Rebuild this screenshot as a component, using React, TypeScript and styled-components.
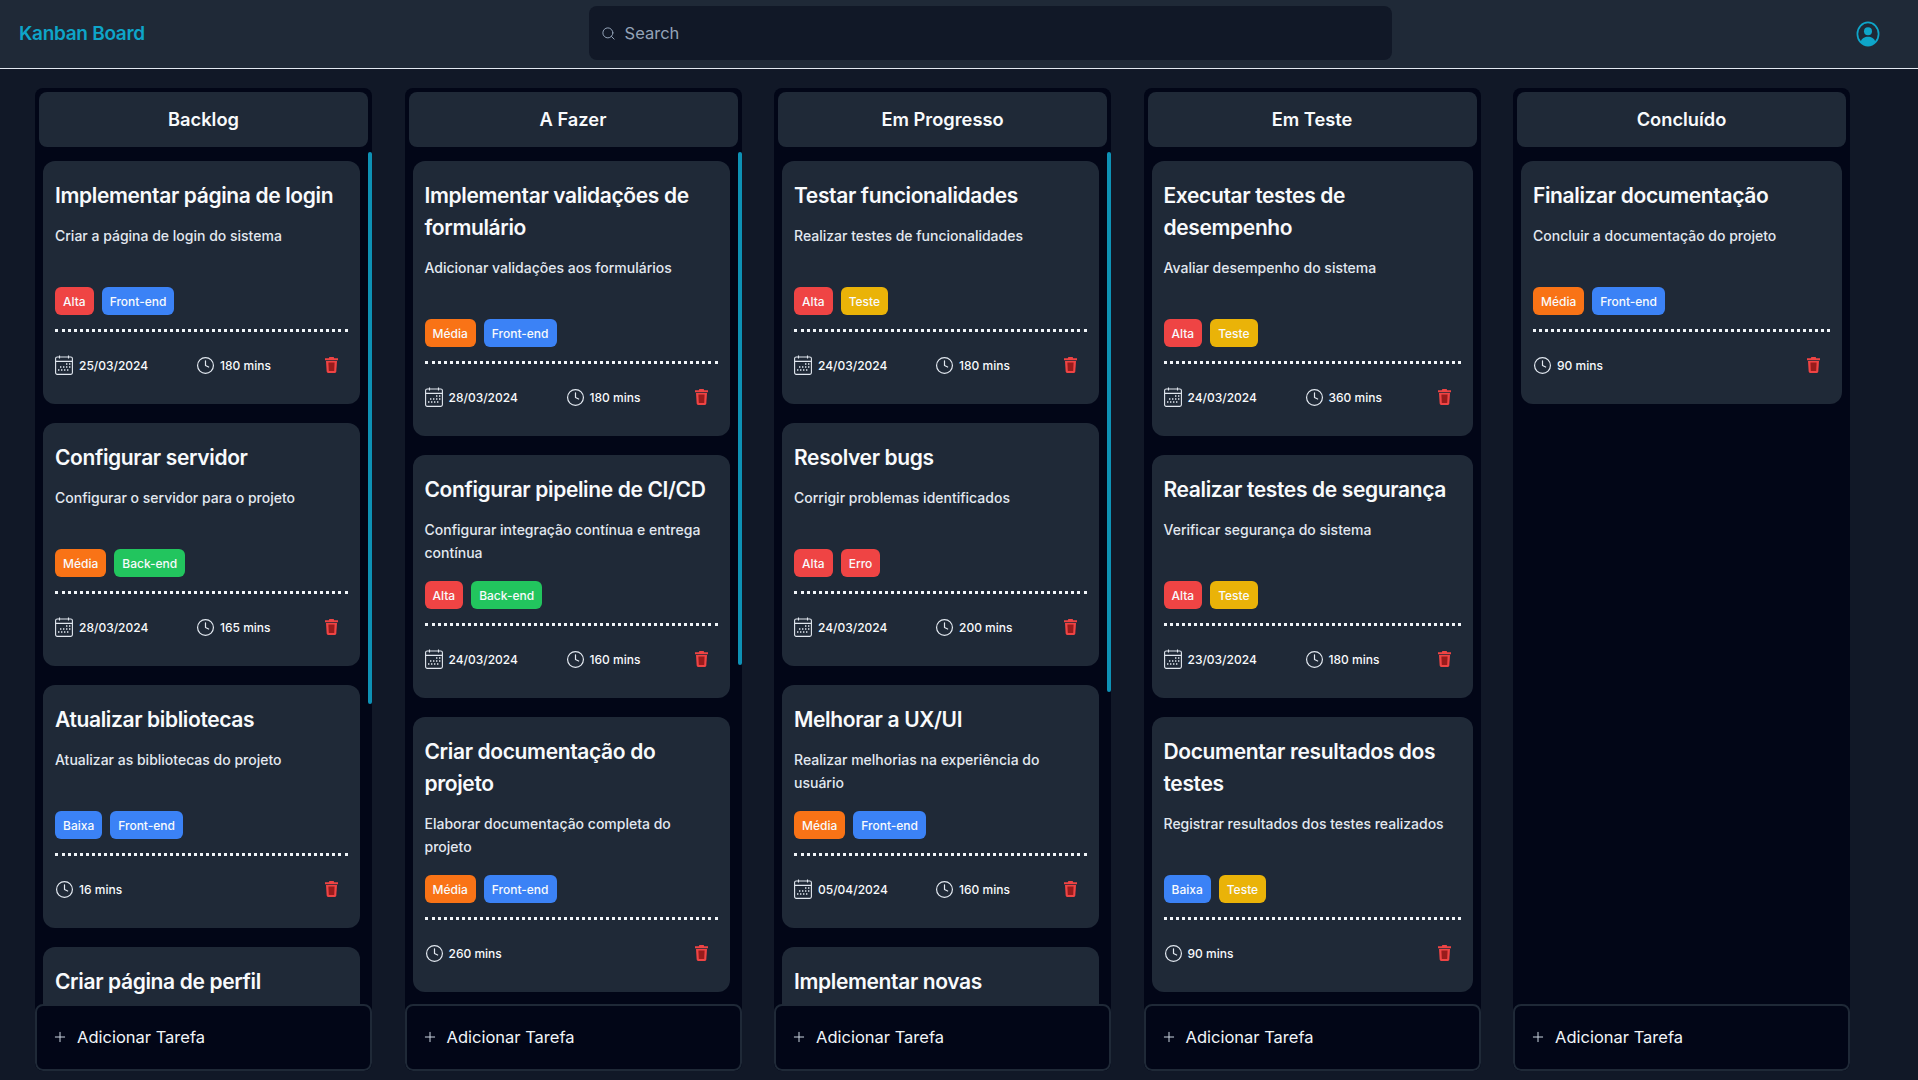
import { Clock, Plus, Search } from 'lucide-react'
import styled, { createGlobalStyle } from 'styled-components'

type TagKind = 'red' | 'orange' | 'blue' | 'green' | 'yellow'

interface Tarefa {
  titulo: string
  descricao: string
  tags: [string, TagKind][]
  data?: string
  tempo: string
}

interface Coluna {
  nome: string
  thumb?: number
  tarefas: Tarefa[]
}

const alta: [string, TagKind] = ['Alta', 'red']
const media: [string, TagKind] = ['Média', 'orange']
const baixa: [string, TagKind] = ['Baixa', 'blue']
const front: [string, TagKind] = ['Front-end', 'blue']
const back: [string, TagKind] = ['Back-end', 'green']
const teste: [string, TagKind] = ['Teste', 'yellow']
const erro: [string, TagKind] = ['Erro', 'red']

const colunas: Coluna[] = [
  {
    nome: 'Backlog',
    thumb: 552,
    tarefas: [
      { titulo: 'Implementar página de login', descricao: 'Criar a página de login do sistema', tags: [alta, front], data: '25/03/2024', tempo: '180 mins' },
      { titulo: 'Configurar servidor', descricao: 'Configurar o servidor para o projeto', tags: [media, back], data: '28/03/2024', tempo: '165 mins' },
      { titulo: 'Atualizar bibliotecas', descricao: 'Atualizar as bibliotecas do projeto', tags: [baixa, front], tempo: '16 mins' },
      { titulo: 'Criar página de perfil', descricao: '', tags: [], tempo: '' },
    ],
  },
  {
    nome: 'A Fazer',
    thumb: 513,
    tarefas: [
      { titulo: 'Implementar validações de formulário', descricao: 'Adicionar validações aos formulários', tags: [media, front], data: '28/03/2024', tempo: '180 mins' },
      { titulo: 'Configurar pipeline de CI/CD', descricao: 'Configurar integração contínua e entrega contínua', tags: [alta, back], data: '24/03/2024', tempo: '160 mins' },
      { titulo: 'Criar documentação do projeto', descricao: 'Elaborar documentação completa do projeto', tags: [media, front], tempo: '260 mins' },
    ],
  },
  {
    nome: 'Em Progresso',
    thumb: 540,
    tarefas: [
      { titulo: 'Testar funcionalidades', descricao: 'Realizar testes de funcionalidades', tags: [alta, teste], data: '24/03/2024', tempo: '180 mins' },
      { titulo: 'Resolver bugs', descricao: 'Corrigir problemas identificados', tags: [alta, erro], data: '24/03/2024', tempo: '200 mins' },
      { titulo: 'Melhorar a UX/UI', descricao: 'Realizar melhorias na experiência do usuário', tags: [media, front], data: '05/04/2024', tempo: '160 mins' },
      { titulo: 'Implementar novas', descricao: '', tags: [], tempo: '' },
    ],
  },
  {
    nome: 'Em Teste',
    tarefas: [
      { titulo: 'Executar testes de desempenho', descricao: 'Avaliar desempenho do sistema', tags: [alta, teste], data: '24/03/2024', tempo: '360 mins' },
      { titulo: 'Realizar testes de segurança', descricao: 'Verificar segurança do sistema', tags: [alta, teste], data: '23/03/2024', tempo: '180 mins' },
      { titulo: 'Documentar resultados dos testes', descricao: 'Registrar resultados dos testes realizados', tags: [baixa, teste], tempo: '90 mins' },
    ],
  },
  {
    nome: 'Concluído',
    tarefas: [
      { titulo: 'Finalizar documentação', descricao: 'Concluir a documentação do projeto', tags: [media, front], tempo: '90 mins' },
    ],
  },
]

function CalendarIcon() {
  return (
    <svg width="18" height="20" viewBox="0 0 18 20" fill="none" stroke="#e2e8f0" strokeWidth="1.1">
      <rect x="0.6" y="2" width="16.8" height="17.4" rx="1.6" />
      <path d="M0.6 6.4h16.8M4.5 0.4v3M13.5 0.4v3" />
      <path d="M11 9h1.4M14 9h1.4M5 12h1.4M8 12h1.4M11 12h1.4M14 12h1.4M3 15h1.4M6 15h1.4M9 15h1.4M12 15h1.4" strokeWidth="1.7" />
    </svg>
  )
}

function TrashIcon() {
  return (
    <svg width="13" height="16" viewBox="0 0 13 16" fill="#ef4444">
      <path d="M4.4 0h4.2l.6 1.3H13v1.9H0V1.3h3.8z" />
      <path d="M1 4h11l-.7 10.6c-.1.8-.6 1.4-1.4 1.4H3.1c-.8 0-1.3-.6-1.4-1.4z" />
      <path d="M3.4 5.5h6.2l-.4 8.5H3.8z" fill="#991b1b" />
    </svg>
  )
}

function UserIcon() {
  return (
    <svg width="24" height="26" viewBox="0 0 24 26">
      <ellipse cx="12" cy="13" rx="10.6" ry="11.6" fill="none" stroke="#0ea5c9" strokeWidth="1.7" />
      <circle cx="12" cy="10.2" r="4" fill="#0ea5c9" />
      <path d="M4.6 21c1-3.6 4-5.2 7.4-5.2s6.4 1.6 7.4 5.2c-1.8 2.2-4.4 3.6-7.4 3.6S6.4 23.2 4.6 21z" fill="#0ea5c9" />
    </svg>
  )
}

function Cartao({ tarefa }: { tarefa: Tarefa }) {
  return (
    <Card>
      <CardTitle>{tarefa.titulo}</CardTitle>
      <CardDescription>{tarefa.descricao}</CardDescription>
      <TagRow>
        {tarefa.tags.map(([texto, kind]) => (
          <Tag key={texto} $kind={kind}>{texto}</Tag>
        ))}
      </TagRow>
      <Dotted />
      <CardFooter>
        {tarefa.data && (
          <DateInfo>
            <CalendarIcon />
            {tarefa.data}
          </DateInfo>
        )}
        <TimeInfo>
          <Clock size={19} strokeWidth={1.5} color="#e2e8f0" />
          {tarefa.tempo}
        </TimeInfo>
        <TrashButton>
          <TrashIcon />
        </TrashButton>
      </CardFooter>
    </Card>
  )
}

export default function App() {
  return (
    <>
      <GlobalStyle />
      <Header>
        <Logo>Kanban Board</Logo>
        <SearchBox>
          <Search size={15} strokeWidth={1.6} color="#94a3b8" />
          <span>Search</span>
        </SearchBox>
        <UserIcon />
      </Header>
      <Board>
        {colunas.map((coluna) => (
          <Column key={coluna.nome}>
            <ColumnHeader>{coluna.nome}</ColumnHeader>
            {coluna.thumb && <ScrollThumb style={{ height: coluna.thumb }} />}
            <CardList $scroll={!!coluna.thumb}>
              {coluna.tarefas.map((tarefa) => (
                <Cartao key={tarefa.titulo} tarefa={tarefa} />
              ))}
            </CardList>
            <AddButton>
              <Plus size={16} strokeWidth={1.5} color="#cbd5e1" />
              Adicionar Tarefa
            </AddButton>
          </Column>
        ))}
      </Board>
    </>
  )
}

const tagColors: Record<TagKind, string> = {
  red: '#ef4444',
  orange: '#f97316',
  blue: '#3b82f6',
  green: '#22c55e',
  yellow: '#eab308',
}

const GlobalStyle = createGlobalStyle`
  html, body {
    margin: 0;
    height: 100%;
    overflow: hidden;
    background: #111827;
  }
  body {
    font-family: Inter, "Liberation Sans", sans-serif;
    color: #f8fafc;
  }
`

const Header = styled.header`
  height: 68px;
  box-sizing: content-box;
  display: flex;
  align-items: center;
  justify-content: space-between;
  padding: 0 38px 0 19px;
  background: #1f2937;
  border-bottom: 1px solid #e2e8f0;
`

const Logo = styled.div`
  width: 570px;
  margin-bottom: 2px;
  font-size: 19px;
  letter-spacing: -0.3px;
  font-weight: 600;
  color: #0ea5c9;
`

const SearchBox = styled.div`
  width: 804px;
  height: 54px;
  box-sizing: border-box;
  display: flex;
  align-items: center;
  gap: 9px;
  padding-left: 12px;
  margin: 0 464px 2px 0;
  border-radius: 8px;
  background: #111827;
  font-size: 16.5px;
  color: #94a3b8;
`

const Board = styled.main`
  display: grid;
  grid-template-columns: repeat(5, 337px);
  column-gap: 32.5px;
  padding: 19px 0 0 35px;
`

const Column = styled.section`
  position: relative;
  height: 983px;
  box-sizing: border-box;
  display: flex;
  flex-direction: column;
  padding-top: 4px;
  overflow: hidden;
  border-radius: 8px;
  background: #020617;
`

const ColumnHeader = styled.h2`
  flex: none;
  height: 55px;
  box-sizing: border-box;
  margin: 0 4px;
  padding-bottom: 2px;
  display: flex;
  align-items: center;
  justify-content: center;
  border-radius: 8px;
  background: #1f2937;
  font-size: 18.3px;
  font-weight: 600;
`

const ScrollThumb = styled.div`
  position: absolute;
  top: 64px;
  right: 0;
  width: 4px;
  border-radius: 2px;
  background: #0e91b5;
`

const CardList = styled.div<{ $scroll: boolean }>`
  flex: 1;
  min-height: 0;
  overflow: hidden;
  display: flex;
  flex-direction: column;
  gap: 19px;
  padding: 14px ${(p) => (p.$scroll ? 12 : 8)}px 0 8px;
`

const Card = styled.article`
  flex: none;
  padding: 19px 12px 6px;
  border-radius: 12px;
  background: #1f2937;
`

const CardTitle = styled.h3`
  margin: 0 0 12px;
  font-size: 21px;
  letter-spacing: -0.36px;
  line-height: 32px;
  font-weight: 600;
`

const CardDescription = styled.p`
  margin: 0 0 17px;
  min-height: 46px;
  font-size: 14px;
  line-height: 23px;
  font-weight: 500;
  color: #e2e8f0;
`

const TagRow = styled.div`
  display: flex;
  gap: 8px;
`

const Tag = styled.span<{ $kind: TagKind }>`
  height: 28px;
  display: flex;
  align-items: center;
  padding: 0 8px;
  border-radius: 6px;
  background: ${(p) => tagColors[p.$kind]};
  font-size: 12px;
  font-weight: 500;
`

const Dotted = styled.div`
  margin-top: 14px;
  border-top: 3px dotted #f1f5f9;
`

const CardFooter = styled.div`
  display: flex;
  align-items: center;
  height: 66px;
  font-size: 12px;
  font-weight: 500;
`

const DateInfo = styled.div`
  width: 141px;
  display: flex;
  align-items: center;
  gap: 6px;
`

const TimeInfo = styled.div`
  display: flex;
  align-items: center;
  gap: 5px;
`

const TrashButton = styled.div`
  margin-left: auto;
  margin-right: 10px;
  display: flex;
`

const AddButton = styled.button`
  flex: none;
  height: 67px;
  box-sizing: border-box;
  display: flex;
  align-items: center;
  gap: 9px;
  padding: 0 15px 2px;
  border: 2px solid #1f2937;
  border-radius: 8px;
  background: #020617;
  color: #f1f5f9;
  font-family: inherit;
  font-size: 16.5px;
`
